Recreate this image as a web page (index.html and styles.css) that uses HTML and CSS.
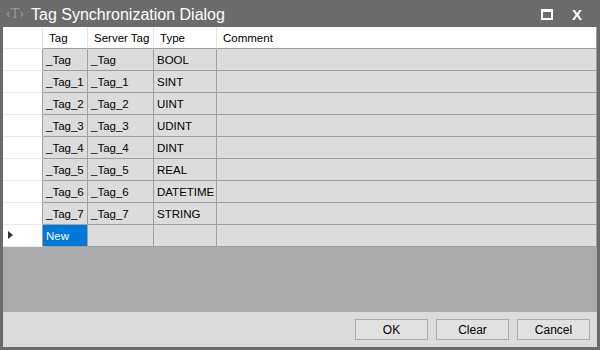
FILE: index.html
```html
<!DOCTYPE html>
<html lang="en">
<head>
  <meta charset="UTF-8" />
  <title>Tag Synchronization Dialog</title>
  <link rel="stylesheet" href="styles.css">
</head>
<body>
  <div class="window">
    <div class="titlebar">
      <span class="app-icon">&lsaquo;T&rsaquo;</span>
      <span class="title">Tag Synchronization Dialog</span>
      <span class="max-btn"></span>
      <span class="close-btn">X</span>
    </div>

    <div class="client">
      <div class="grid">
        <div class="rh head"></div>
        <div class="hc">Tag</div>
        <div class="hc">Server Tag</div>
        <div class="hc">Type</div>
        <div class="hc last">Comment</div>

        <div class="rh"></div><div class="c">_Tag</div><div class="c">_Tag</div><div class="c">BOOL</div><div class="c last"></div>
        <div class="rh"></div><div class="c">_Tag_1</div><div class="c">_Tag_1</div><div class="c">SINT</div><div class="c last"></div>
        <div class="rh"></div><div class="c">_Tag_2</div><div class="c">_Tag_2</div><div class="c">UINT</div><div class="c last"></div>
        <div class="rh"></div><div class="c">_Tag_3</div><div class="c">_Tag_3</div><div class="c">UDINT</div><div class="c last"></div>
        <div class="rh"></div><div class="c">_Tag_4</div><div class="c">_Tag_4</div><div class="c">DINT</div><div class="c last"></div>
        <div class="rh"></div><div class="c">_Tag_5</div><div class="c">_Tag_5</div><div class="c">REAL</div><div class="c last"></div>
        <div class="rh"></div><div class="c">_Tag_6</div><div class="c">_Tag_6</div><div class="c">DATETIME</div><div class="c last"></div>
        <div class="rh"></div><div class="c">_Tag_7</div><div class="c">_Tag_7</div><div class="c">STRING</div><div class="c last"></div>
        <div class="rh current"><span class="arrow"></span></div><div class="c selected">New</div><div class="c"></div><div class="c"></div><div class="c last"></div>
      </div>

      <div class="empty"></div>

      <div class="footer">
        <button>OK</button>
        <button>Clear</button>
        <button>Cancel</button>
      </div>
    </div>
  </div>
</body>
</html>
```

FILE: styles.css
```css
* {
  margin: 0;
  padding: 0;
  box-sizing: border-box;
}

body {
  background: #6b6b6b;
  font-family: "Liberation Sans", Arial, sans-serif;
  font-size: 11.5px;
  color: #000;
}

.window {
  width: 600px;
  height: 350px;
  display: flex;
  flex-direction: column;
  background: #6b6b6b;
}

.titlebar {
  height: 27px;
  display: flex;
  align-items: center;
  color: #fff;
  padding-left: 6px;
}

.app-icon {
  font-family: "Liberation Serif", serif;
  font-size: 14px;
  color: #9c9c9c;
  width: 25px;
  margin-top: 1px;
}

.title {
  font-size: 16px;
  flex: 1;
  margin-top: 2px;
}

.max-btn {
  width: 12px;
  height: 11px;
  border: 2px solid #fff;
  border-top-width: 3px;
  margin-right: 19px;
  margin-top: 2px;
}

.close-btn {
  font-weight: bold;
  font-size: 15px;
  width: 24px;
  margin-right: 4px;
  margin-top: 2px;
}

.client {
  flex: 1;
  display: flex;
  flex-direction: column;
  margin: 0 3px 3px 3px;
}

.grid {
  display: grid;
  grid-template-columns: 40px 45px 66px 63px 1fr;
  grid-auto-rows: 22px;
  border-right: 1px solid #a0a0a0;
}

.grid > div {
  line-height: 22px;
  white-space: nowrap;
  overflow: hidden;
}

.rh {
  background: #fff;
  border-right: 1px solid #a0a0a0;
  border-bottom: 1px solid #eaeaea;
  position: relative;
}

.rh.head {
  border-right-color: #e4e4e4;
}

.hc {
  background: #fff;
  padding-left: 6px;
  border-right: 1px solid #e4e4e4;
  border-bottom: 1px solid #a0a0a0;
}

.c {
  background: #dcdcdc;
  padding-left: 3px;
  border-right: 1px solid #a0a0a0;
  border-bottom: 1px solid #a0a0a0;
}

.grid .last {
  border-right: none;
}

.c.selected {
  background: #0078d7;
  color: #fff;
}

.arrow {
  position: absolute;
  left: 5px;
  top: 6px;
  width: 0;
  height: 0;
  border-top: 4.5px solid transparent;
  border-bottom: 4.5px solid transparent;
  border-left: 5px solid #333;
}

.empty {
  flex: 1;
  background: #ababab;
}

.footer {
  height: 35px;
  background: #dcdcdc;
  display: flex;
  justify-content: flex-end;
  gap: 8px;
  padding: 7px 7px 0 0;
}

button {
  width: 73px;
  height: 21px;
  background: #e1e1e1;
  border: 1px solid #adadad;
  font-family: "Liberation Sans", Arial, sans-serif;
  font-size: 12px;
  color: #000;
}
```
